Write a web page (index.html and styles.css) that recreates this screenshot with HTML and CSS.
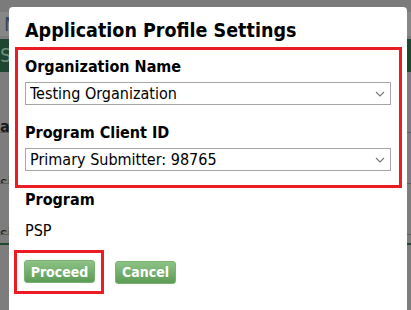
FILE: index.html
```html
<!DOCTYPE html>
<html lang="en">
<head>
    <meta charset="UTF-8">
    <meta name="viewport" content="width=device-width, initial-scale=1.0">
    <title>Application Profile Settings</title>
    <link rel="stylesheet" href="styles.css">
</head>
<body>

<div class="page">
    <div class="top-strip"></div>
    <div class="nav-bar"><span>M</span></div>
    <div class="green-bar"><span>Se</span></div>
    <div class="row row-link"><span>ar</span></div>
    <div class="row"><span>si</span></div>
    <div class="row"><span>si</span></div>
    <div class="green-line"></div>
</div>

<div class="dialog">
    <h1>Application Profile Settings</h1>

    <div class="highlight fields">
        <div class="form-group">
            <label for="org">Organization Name</label>
            <select id="org">
                <option>Testing Organization</option>
            </select>
        </div>
        <div class="form-group">
            <label for="client">Program Client ID</label>
            <select id="client">
                <option>Primary Submitter: 98765</option>
            </select>
        </div>
    </div>

    <div class="info">
        <div class="info-label">Program</div>
        <div class="info-value">PSP</div>
    </div>

    <div class="actions">
        <div class="highlight btn-wrap">
            <button type="button" class="btn btn-proceed">Proceed</button>
        </div>
        <button type="button" class="btn btn-cancel">Cancel</button>
    </div>
</div>

</body>
</html>
```

FILE: styles.css
```css
body {
    margin: 0;
    height: 310px;
    overflow: hidden;
    background-color: #7d7d7d;
    font-family: Tahoma, "DejaVu Sans Condensed", "DejaVu Sans", sans-serif;
}

/* dimmed page behind the dialog */
.page {
    color: #1b1b1b;
    font-size: 16px;
}
.top-strip {
    height: 12px;
    background-color: #7b7b7b;
}
.nav-bar {
    height: 24px;
    background-color: #878787;
    color: #2c4866;
    font-size: 20px;
    line-height: 24px;
    padding-left: 4px;
}
.green-bar {
    height: 33px;
    margin-top: 3px;
    background-color: #1e4630;
    color: #6f8f7d;
    font-size: 20px;
    line-height: 33px;
}
.row {
    height: 50px;
    border-bottom: 1px solid #5e5e5e;
    line-height: 100px;
    overflow: hidden;
}
.row-link {
    height: 60px;
    line-height: 110px;
}
.row-link span {
    text-decoration: underline;
    font-weight: bold;
}
.green-line {
    height: 2px;
    margin-top: 8px;
    background-color: #1e4630;
}

/* dialog */
.dialog {
    position: absolute;
    left: 9px;
    top: 7px;
    width: 398px;
    height: 320px;
    box-sizing: border-box;
    padding: 12px 0 0 6px;
    background-color: #fff;
    border-radius: 4px;
    color: #000;
}
h1 {
    margin: 0 0 4px 10px;
    font-size: 19.5px;
    font-weight: bold;
    line-height: 24px;
}
.highlight {
    border: 3px solid #ec1c24;
}
.fields {
    width: 387px;
    box-sizing: border-box;
    padding: 7px 8px 14px 7px;
}
.form-group + .form-group {
    margin-top: 18px;
}
label {
    display: block;
    font-weight: bold;
    font-size: 16px;
    line-height: 20px;
    margin-bottom: 5px;
}
select {
    display: block;
    width: 100%;
    height: 23px;
    padding: 0 20px 0 4px;
    font-family: inherit;
    font-size: 16px;
    color: #000;
    background: #fff url("data:image/svg+xml,%3Csvg xmlns='http://www.w3.org/2000/svg' width='10' height='6' viewBox='0 0 10 6'%3E%3Cpath d='M1 1l4 4 4-4' fill='none' stroke='%23777' stroke-width='1.1'/%3E%3C/svg%3E") no-repeat right 5px center;
    border: 1px solid #a6a6a6;
    border-radius: 0;
    appearance: none;
    -webkit-appearance: none;
}
.info {
    margin-top: 4px;
    padding-left: 10px;
    font-size: 16px;
}
.info-label {
    font-weight: bold;
    line-height: 16px;
}
.info-value {
    margin-top: 13px;
    line-height: 20px;
}
.actions {
    display: flex;
    align-items: center;
    gap: 11px;
    margin-top: 9px;
}
.btn-wrap {
    margin-left: -1px;
    padding: 7px 6px 8px 7px;
}
.btn {
    display: block;
    height: 23px;
    padding: 0;
    font-family: inherit;
    font-size: 14px;
    font-weight: bold;
    color: #fff;
    background: linear-gradient(#8dc386, #5c9c55);
    border: 1px solid #7ab271;
    border-radius: 3px;
    cursor: pointer;
}
.btn-proceed {
    width: 71px;
}
.btn-cancel {
    width: 61px;
}
```
